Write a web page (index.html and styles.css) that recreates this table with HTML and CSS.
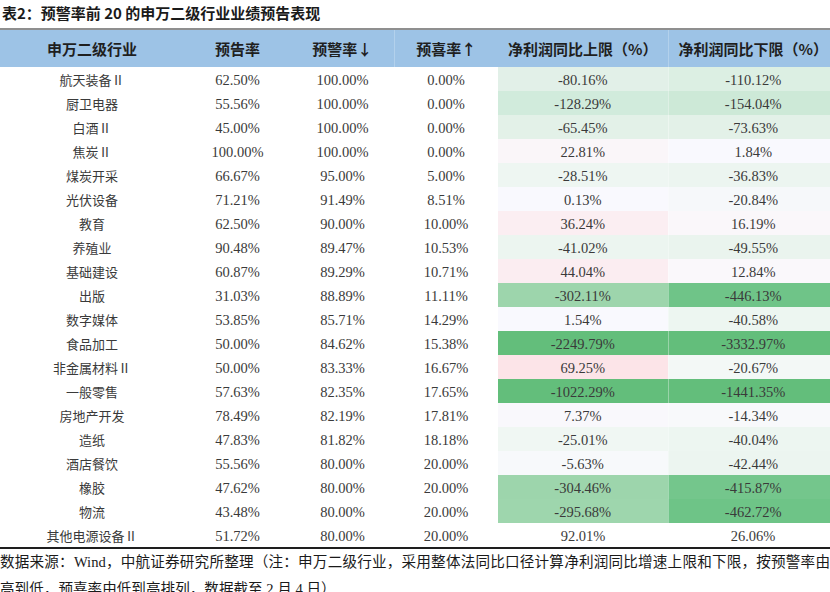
FILE: index.html
```html
<!DOCTYPE html>
<html lang="zh-CN">
<head>
<meta charset="utf-8">
<title>表2</title>
<link rel="stylesheet" href="styles.css">
</head>
<body>
<div class="page">
  <div class="title">表2：预警率前 20 的申万二级行业业绩预告表现</div>
  <div class="wrap">
    <table class="grid">
      <colgroup>
        <col class="c1"><col class="c2"><col class="c3"><col class="c4"><col class="c5"><col class="c6">
      </colgroup>
      <thead>
        <tr><th>申万二级行业</th><th>预告率</th><th>预警率↓</th><th class="sep">预喜率↑</th><th>净利润同比上限（%）</th><th class="sep">净利润同比下限（%）</th></tr>
      </thead>
      <tbody>
        <tr><td class="name">航天装备Ⅱ</td><td>62.50%</td><td>100.00%</td><td>0.00%</td><td class="h" style="background:#e2f0e8">-80.16%</td><td class="h" style="background:#dcefe3">-110.12%</td></tr>
        <tr><td class="name">厨卫电器</td><td>55.56%</td><td>100.00%</td><td>0.00%</td><td class="h" style="background:#d1ebdc">-128.29%</td><td class="h" style="background:#cde9d7">-154.04%</td></tr>
        <tr><td class="name">白酒Ⅱ</td><td>45.00%</td><td>100.00%</td><td>0.00%</td><td class="h" style="background:#e3f1e8">-65.45%</td><td class="h" style="background:#e3f1e8">-73.63%</td></tr>
        <tr><td class="name">焦炭Ⅱ</td><td>100.00%</td><td>100.00%</td><td>0.00%</td><td class="h" style="background:#faf6f9">22.81%</td><td class="h" style="background:#f9f9fe">1.84%</td></tr>
        <tr><td class="name">煤炭开采</td><td>66.67%</td><td>95.00%</td><td>5.00%</td><td class="h" style="background:#eef6f2">-28.51%</td><td class="h" style="background:#ecf5f0">-36.83%</td></tr>
        <tr><td class="name">光伏设备</td><td>71.21%</td><td>91.49%</td><td>8.51%</td><td class="h" style="background:#f9f9fe">0.13%</td><td class="h" style="background:#f6f8fa">-20.84%</td></tr>
        <tr><td class="name">教育</td><td>62.50%</td><td>90.00%</td><td>10.00%</td><td class="h" style="background:#fbeef2">36.24%</td><td class="h" style="background:#faf7fa">16.19%</td></tr>
        <tr><td class="name">养殖业</td><td>90.48%</td><td>89.47%</td><td>10.53%</td><td class="h" style="background:#ecf5f0">-41.02%</td><td class="h" style="background:#eaf4ee">-49.55%</td></tr>
        <tr><td class="name">基础建设</td><td>60.87%</td><td>89.29%</td><td>10.71%</td><td class="h" style="background:#fbedf1">44.04%</td><td class="h" style="background:#faf8fb">12.84%</td></tr>
        <tr><td class="name">出版</td><td>31.03%</td><td>88.89%</td><td>11.11%</td><td class="h" style="background:#9dd5ac">-302.11%</td><td class="h" style="background:#6fc488">-446.13%</td></tr>
        <tr><td class="name">数字媒体</td><td>53.85%</td><td>85.71%</td><td>14.29%</td><td class="h" style="background:#f9f9fe">1.54%</td><td class="h" style="background:#edf6f1">-40.58%</td></tr>
        <tr><td class="name">食品加工</td><td>50.00%</td><td>84.62%</td><td>15.38%</td><td class="h" style="background:#63be7b">-2249.79%</td><td class="h" style="background:#63be7b">-3332.97%</td></tr>
        <tr><td class="name">非金属材料Ⅱ</td><td>50.00%</td><td>83.33%</td><td>16.67%</td><td class="h" style="background:#fce4e8">69.25%</td><td class="h" style="background:#f3f8f6">-20.67%</td></tr>
        <tr><td class="name">一般零售</td><td>57.63%</td><td>82.35%</td><td>17.65%</td><td class="h" style="background:#63be7b">-1022.29%</td><td class="h" style="background:#63be7b">-1441.35%</td></tr>
        <tr><td class="name">房地产开发</td><td>78.49%</td><td>82.19%</td><td>17.81%</td><td class="h" style="background:#f9f8fc">7.37%</td><td class="h" style="background:#f8f9fb">-14.34%</td></tr>
        <tr><td class="name">造纸</td><td>47.83%</td><td>81.82%</td><td>18.18%</td><td class="h" style="background:#f0f7f3">-25.01%</td><td class="h" style="background:#edf6f1">-40.04%</td></tr>
        <tr><td class="name">酒店餐饮</td><td>55.56%</td><td>80.00%</td><td>20.00%</td><td class="h" style="background:#f7f9fb">-5.63%</td><td class="h" style="background:#ecf5f0">-42.44%</td></tr>
        <tr><td class="name">橡胶</td><td>47.62%</td><td>80.00%</td><td>20.00%</td><td class="h" style="background:#9dd5ac">-304.46%</td><td class="h" style="background:#74c68c">-415.87%</td></tr>
        <tr><td class="name">物流</td><td>43.48%</td><td>80.00%</td><td>20.00%</td><td class="h" style="background:#9ed6ad">-295.68%</td><td class="h" style="background:#6ec487">-462.72%</td></tr>
        <tr><td class="name">其他电源设备Ⅱ</td><td>51.72%</td><td>80.00%</td><td>20.00%</td><td>92.01%</td><td>26.06%</td></tr>
      </tbody>
    </table>
  </div>
  <p class="source">数据来源：Wind，中航证券研究所整理（注：申万二级行业，采用整体法同比口径计算净利润同比增速上限和下限，按预警率由高到低，预喜率由低到高排列，数据截至 2 月 4 日）</p>
</div>
</body>
</html>
```

FILE: styles.css
```css
html, body {
  margin: 0;
  padding: 0;
  background: #ffffff;
}

.page {
  width: 830px;
  overflow: hidden;
}

.title {
  height: 28px;
  line-height: 26px;
  padding-left: 2px;
  font-family: "Noto Sans CJK SC", sans-serif;
  font-weight: 700;
  font-size: 15px;
  color: #1a1a1a;
  white-space: nowrap;
}

.wrap {
  width: 830px;
  overflow: hidden;
}

.grid {
  width: 838px;
  table-layout: fixed;
  border-collapse: collapse;
  border-top: 2px solid #8f8f8f;
  border-bottom: 2px solid #1e1e1e;
  font-family: "Liberation Serif", "Noto Sans CJK SC", serif;
  font-size: 14.5px;
  color: #3a3a3a;
}

.c1 { width: 184px; }
.c2 { width: 107px; }
.c3 { width: 103px; }
.c4 { width: 104px; }
.c5 { width: 170px; }
.c6 { width: 170px; }

.grid th {
  height: 37px;
  padding: 0;
  background: #9dc3e6;
  font-family: "Noto Sans CJK SC", sans-serif;
  font-weight: 600;
  font-size: 15px;
  color: #1f1f1f;
  text-align: center;
  white-space: nowrap;
}

.grid th.sep {
  border-left: 1px solid #b3d1ec;
}

.grid td {
  height: 22px;
  padding: 2px 0 0;
  text-align: center;
  white-space: nowrap;
  line-height: 22px;
}

.grid td.name {
  font-family: "Noto Sans CJK SC", sans-serif;
  font-size: 13px;
}

.grid td.h + td.h {
  border-left: 1px solid rgba(255, 255, 255, 0.35);
}

.source {
  margin: 0;
  font-family: "Liberation Serif", "Noto Sans CJK SC", sans-serif;
  font-size: 14.6px;
  line-height: 27px;
  color: #1a1a1a;
  text-align: justify;
  width: 830px;
}
```
